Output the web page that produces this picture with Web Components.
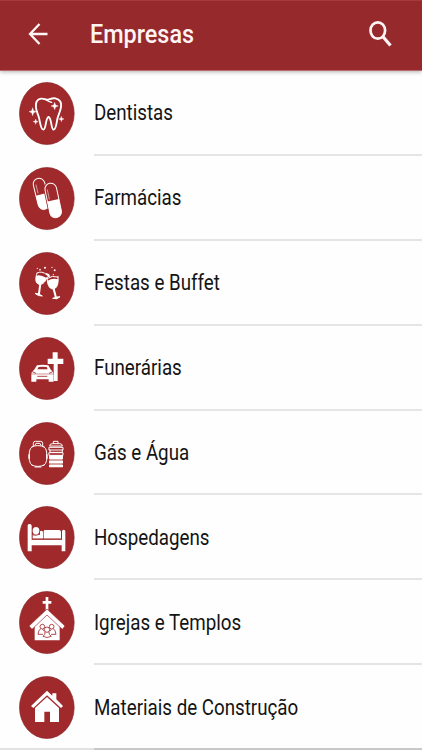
<!DOCTYPE html>
<html lang="pt-BR">
<head>
<meta charset="utf-8">
<title>Empresas</title>
<style>
  body {
    margin: 0;
    height: 750px;
    overflow: hidden;
    background: #fefefe;
    color: #141414;
    font-family: Roboto, "Liberation Sans", sans-serif;
  }
</style>
</head>
<body>
<company-screen></company-screen>

<script>
// One drawing per category. They all share the viewBox set in category-icon.
const icons = {
  tooth: `
    <path d="M78 98C76 83 82 73 93 71C101 70 105 74 111 74C118 74 125 68 136 70C150 73 155 82 153 96C151 110 145 119 142 132C140 143 138 163 131 164C123 165 125 128 116 126C106 127 109 164 100 164C91 163 90 139 87 128C84 117 79 109 78 98Z" class="line" stroke-width="5.500"/>
    <path d="M108 74Q116 80 125 82" class="line" stroke-width="4"/>
    <path d="M134 82l3 8 8 3-8 3-3 8-3-8-8-3 8-3zM68 98l3 9 8 3-8 3-3 9-3-9-8-3 8-3zM77 132l2 6 6 2-6 2-2 6-2-6-6-2 6-2zM154 124l2 6 6 2-6 2-2 6-2-6-6-2 6-2z" stroke="#fff"/>`,
  pills: `
    <g transform="rotate(-14 93 98)">
      <rect x="76" y="54" width="35" height="95" rx="17.500" class="line" stroke-width="3"/>
      <path d="M76 103h35v29a17.500 17.500 0 0 1-35 0z"/>
      <path d="M84 72v25" class="line" stroke-width="1.500"/>
    </g>
    <g transform="rotate(-12 129 121)">
      <rect x="108" y="65" width="43" height="113" rx="21" class="gap"/>
      <rect x="112" y="69" width="35" height="105" rx="17.500" class="line" stroke-width="3"/>
      <path d="M112 121h35v35a17.500 17.500 0 0 1-35 0z"/>
      <path d="M119 87v28" class="line" stroke-width="1.500"/>
    </g>`,
  glasses: `
    <g class="line" stroke-width="3">
      <path d="M81 84C76 99 76 111 83 116C94 122 106 114 111 97"/>
      <path d="M82 84Q95 76 110 89"/>
      <path d="M112 98C111 118 117 130 128 132C140 132 146 119 144 94"/>
      <path d="M113 100Q126 90 143 96"/>
    </g>
    <path d="M79 92Q90 88 110 99C104 115 92 121 83 116C77 112 76 103 79 92Z"/>
    <path d="M113 107Q127 98 145 103C145 122 139 131 128 132C118 130 113 121 113 107Z"/>
    <path d="M91 116L87 146M131 131L138 158" class="line" stroke-width="6"/>
    <path d="M75 145Q87 145 97 153Q84 154 75 145ZM128 160Q139 155 150 155Q141 165 128 160Z" stroke="#fff" stroke-width="3"/>
    <path d="M106 83l11 4 4 8-7 1z"/>
    <circle cx="90" cy="74" r="2.500"/><circle cx="105" cy="68" r="3"/><circle cx="126" cy="67" r="2"/><circle cx="134" cy="76" r="3"/><circle cx="130" cy="89" r="2"/><circle cx="82" cy="70" r="2"/>`,
  hearse: `
    <path d="M128 67h15v19h17v16h-17v51h-12v-51h-18V86h15z"/>
    <path d="M79 105Q98 101 117 105L125 120Q132 124 132 133V155H119V147H77V155H64V133Q63 124 70 120Z" class="gap"/>
    <path d="M81 106Q98 103 115 106L123 120Q131 123 131 131H64Q64 124 72 120Z"/>
    <path d="M86 111Q98 109 110 111L113 118H82Z" class="gap"/>
    <path d="M64 133H131V155H116V148H79V155H64Z"/>
    <path d="M65 124l13 6M130 124l-13 6M82 139h30" class="gap-line"/>`,
  gas: `
    <g class="line" stroke-width="3">
      <path d="M67 95Q59 100 58 111V136Q60 148 67 151M101 95Q109 100 110 111V136Q108 148 101 151"/>
      <path d="M65 96Q83 87 103 96M65 150Q83 159 103 150"/>
      <path d="M70 92V85Q70 79 76 79H92Q98 79 98 85V92M75 91l3-6h12l3 6M75 156h18"/>
      <path d="M57 119v11M111 119v11" stroke-width="4"/>
      <path d="M130 86V79H144V86M119 92Q119 86 127 86H149Q157 86 157 92Z"/>
      <path d="M118 97H159V105H118ZM120 105V112H157V105M118 113H159V121H118Z"/>
    </g>
    <path d="M117 121h42v12h-42zM117 136h42v10h-42zM117 149h42v8h-42z"/>
    <path d="M119 132h38v18h-38z"/>
    <path d="M117 135h42M117 147h42" class="gap-line"/>`,
  bed: `
    <path d="M53 79Q53 75 59 75Q65 75 65 80V122H156V97Q156 92 161 92Q166 92 166 97V157H155V139H65V157H53Z"/>
    <ellipse cx="78" cy="95" rx="10" ry="11"/>
    <path d="M68 107H90V97Q99 92 99 102V119H68ZM101 96Q101 93 105 93H147Q153 93 153 99V119H101Z"/>
    <path d="M68 108Q79 111 90 105M66 120H156" class="gap-line"/>`,
  church: `
    <path d="M107 39h8v12h9v8h-9v22h-8V59h-9v-8h9z"/>
    <path d="M74 121L111 82L149 121V169H74Z"/>
    <path d="M57 126L111 75L165 126L157 136L111 93L66 136Z" stroke="#a32b2d" stroke-width="2"/>
    <g class="gap-line" fill="none">
      <circle cx="97" cy="128" r="7"/><circle cx="125" cy="128" r="7"/>
      <path d="M92 134Q85 139 84 151H99M130 134Q137 139 138 151H123M98 136l5 6M124 136l-5 6"/>
      <circle cx="111" cy="137" r="8"/>
      <path d="M105 144Q106 153 99 157Q111 164 124 157Q116 153 117 144"/>
    </g>`,
  house: `
    <path d="M111 65L127 80V73H139V91L159 111L153 117L111 79L70 117L63 111Z"/>
    <path d="M111 84L147 117V159H120V128H103V159H75V117Z"/>`
}

customElements.define('category-icon', class extends HTMLElement {
  connectedCallback () {
    this.attachShadow({ mode: 'open' }).innerHTML = `
      <style>
        :host { display: block; flex: none; width: 56px; height: 63px; }
        svg { display: block; width: 100%; height: 100%; fill: #fff; }
        .disc, .gap { fill: #a0292c; }
        .disc { stroke: #8b2528; stroke-width: 2; }
        .line { fill: none; stroke: #fff; stroke-linejoin: round; stroke-linecap: round; }
        .gap-line { stroke: #a0292c; stroke-width: 2.5; }
      </style>
      <svg viewBox="27 21 168 189">
        <ellipse class="disc" cx="110.5" cy="115.5" rx="82" ry="93"/>
        ${icons[this.getAttribute('name')] || ''}
      </svg>`
  }
})

customElements.define('app-header', class extends HTMLElement {
  connectedCallback () {
    this.attachShadow({ mode: 'open' }).innerHTML = `
      <style>
        :host {
          display: flex;
          align-items: center;
          flex: none;
          box-sizing: border-box;
          height: 71px;
          padding: 0 29px 4px 27px;
          border-top: 1px solid #a33a3c;
          border-bottom: 1px solid #b96a6c;
          background: #96292b;
          color: #fff4f4;
          box-shadow: 0 1px 4px rgba(0, 0, 0, .3);
          z-index: 1;
        }
        svg { display: block; flex: none; fill: none; stroke: #fff4f4; }
        .title {
          flex: 1;
          margin-left: 40.5px;
          font-size: 26px;
          font-weight: 500;
          line-height: 30px;
          white-space: nowrap;
          transform: scaleX(.9);
          transform-origin: 0 50%;
        }
      </style>
      <svg width="22" height="24" viewBox="0 0 22 24" stroke-width="2.300"><path d="M12.500 2L3 12L12.500 22M3 12H20.500"/></svg>
      <div class="title"><slot></slot></div>
      <svg width="26" height="28" viewBox="0 0 26 28" stroke-width="2.700"><ellipse cx="10.800" cy="10.500" rx="7.300" ry="8.200"/><path d="M15.800 16.500L23.500 25.500" stroke-width="3.200"/></svg>`
  }
})

customElements.define('category-row', class extends HTMLElement {
  connectedCallback () {
    this.attachShadow({ mode: 'open' }).innerHTML = `
      <style>
        :host { display: flex; flex: none; height: 84.9px; padding-left: 19px; }
        :host(:last-child) {
          box-shadow: inset 0 -2px #e2e2e2;
          --divider: #c8c8c8;
        }
        category-icon { margin-top: 11px; }
        .body {
          flex: 1;
          display: flex;
          align-items: center;
          box-sizing: border-box;
          margin-left: 19px;
          padding-top: 2px;
          border-bottom: 2px solid var(--divider, #e5e5e5);
        }
        .label {
          font-size: 21.5px;
          line-height: 26px;
          white-space: nowrap;
          transform: scaleX(.872);
          transform-origin: 0 50%;
        }
      </style>
      <category-icon name="${this.getAttribute('icon')}"></category-icon>
      <div class="body"><div class="label"><slot></slot></div></div>`
  }
})

customElements.define('company-screen', class extends HTMLElement {
  connectedCallback () {
    this.attachShadow({ mode: 'open' }).innerHTML = `
      <style>
        :host { display: flex; flex-direction: column; height: 750px; }
        .list { flex: 1; min-height: 0; overflow: hidden; }
      </style>
      <app-header>Empresas</app-header>
      <div class="list">
        <category-row icon="tooth">Dentistas</category-row>
        <category-row icon="pills">Farmácias</category-row>
        <category-row icon="glasses">Festas e Buffet</category-row>
        <category-row icon="hearse">Funerárias</category-row>
        <category-row icon="gas">Gás e Água</category-row>
        <category-row icon="bed">Hospedagens</category-row>
        <category-row icon="church">Igrejas e Templos</category-row>
        <category-row icon="house">Materiais de Construção</category-row>
      </div>`
  }
})
</script>
</body>
</html>
